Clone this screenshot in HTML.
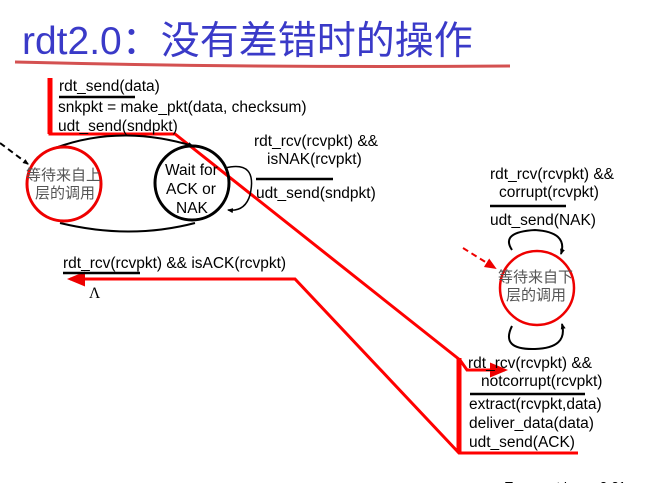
<!DOCTYPE html>
<html><head><meta charset="utf-8"><style>
html,body{margin:0;padding:0;background:#fff;width:652px;height:483px;overflow:hidden}
svg{display:block}
text{font-family:"Liberation Sans","Noto Sans CJK SC",sans-serif;font-size:15.5px;fill:#000}
.cn{fill:#555;font-size:15px}
</style></head><body>
<svg width="652" height="483" viewBox="0 0 652 483">
<defs>
<marker id="ab" markerWidth="6" markerHeight="6" refX="5" refY="3" orient="auto" markerUnits="userSpaceOnUse"><path d="M0,0.5 L6,3 L0,5.5 Z" fill="#000"/></marker>
<marker id="ar" markerWidth="6" markerHeight="6" refX="5" refY="3" orient="auto"><path d="M0,0.5 L6,3 L0,5.5 Z" fill="#e00"/></marker>
</defs>
<text x="22" y="54" style="font-size:39px;fill:#3a3ac8">rdt2.0：没有差错时的操作</text>
<path d="M15,62 Q260,68 510,66" stroke="#c33" stroke-width="3" fill="none" opacity="0.85"/>
<path d="M50,78 V134 H175 L460,360 L467,370 H505" stroke="#f00" stroke-width="3" fill="none" marker-end="url(#ar)"/>
<path d="M50,78 V134" stroke="#f00" stroke-width="5"/>
<path d="M459,358 V452" stroke="#f00" stroke-width="5"/>
<path d="M578,453 H459 L295,279 H70" stroke="#f00" stroke-width="3" fill="none" marker-end="url(#ar)"/>
<text x="59" y="91">rdt_send(data)</text>
<line x1="59" y1="97" x2="135" y2="97" stroke="#000" stroke-width="2.5"/>
<text x="58" y="112">snkpkt = make_pkt(data, checksum)</text>
<text x="58" y="131">udt_send(sndpkt)</text>
<path d="M55,148 Q120,124 193,146" stroke="#000" stroke-width="2" fill="none" marker-end="url(#ab)"/>
<path d="M195,223 Q130,240 60,223" stroke="#000" stroke-width="2" fill="none"/>
<path d="M0,143 L28,164" stroke="#000" stroke-width="2" stroke-dasharray="6,4" fill="none" marker-end="url(#ab)"/>
<circle cx="64" cy="184" r="37" fill="none" stroke="#e00" stroke-width="3"/>
<text class="cn" x="26" y="180">等待来自上</text>
<text class="cn" x="35" y="198">层的调用</text>
<circle cx="192" cy="183" r="37" fill="none" stroke="#000" stroke-width="3"/>
<text x="165" y="175">Wait for</text>
<text x="166" y="194">ACK or</text>
<text x="176" y="213">NAK</text>
<path d="M225,168 Q258,160 250,195 Q245,212 228,210" stroke="#000" stroke-width="1.5" fill="none" marker-end="url(#ab)"/>
<text x="254" y="146">rdt_rcv(rcvpkt) &amp;&amp;</text>
<text x="267" y="164">isNAK(rcvpkt)</text>
<line x1="256" y1="179" x2="333" y2="179" stroke="#000" stroke-width="2.5"/>
<text x="256" y="198">udt_send(sndpkt)</text>
<text x="63" y="268">rdt_rcv(rcvpkt) &amp;&amp; isACK(rcvpkt)</text>
<line x1="63" y1="273" x2="140" y2="273" stroke="#000" stroke-width="2.5"/>
<text x="89" y="298" style="font-family:'Liberation Serif',serif">Λ</text>
<text x="490" y="179">rdt_rcv(rcvpkt) &amp;&amp;</text>
<text x="499" y="197">corrupt(rcvpkt)</text>
<line x1="490" y1="206" x2="566" y2="206" stroke="#000" stroke-width="2.5"/>
<text x="490" y="225">udt_send(NAK)</text>
<path d="M512,250 Q500,232 535,230 Q568,232 561,254" stroke="#000" stroke-width="2" fill="none" marker-end="url(#ab)"/>
<path d="M512,326 Q500,350 535,349 Q568,348 562,324" stroke="#000" stroke-width="2" fill="none" marker-end="url(#ab)"/>
<path d="M463,248 L495,268" stroke="#e00" stroke-width="2" stroke-dasharray="6,4" fill="none" marker-end="url(#ar)"/>
<circle cx="537" cy="288" r="37" fill="none" stroke="#e00" stroke-width="2.5"/>
<text class="cn" x="498" y="282">等待来自下</text>
<text class="cn" x="506" y="300">层的调用</text>
<text x="468" y="368">rdt_rcv(rcvpkt) &amp;&amp;</text>
<text x="481" y="386">notcorrupt(rcvpkt)</text>
<line x1="470" y1="394" x2="585" y2="394" stroke="#000" stroke-width="2.5"/>
<text x="469" y="409">extract(rcvpkt,data)</text>
<text x="469" y="428">deliver_data(data)</text>
<text x="469" y="447">udt_send(ACK)</text>
<text x="505" y="491" style="font-size:13px">Transport Layer  3-31</text>
</svg>
</body></html>
